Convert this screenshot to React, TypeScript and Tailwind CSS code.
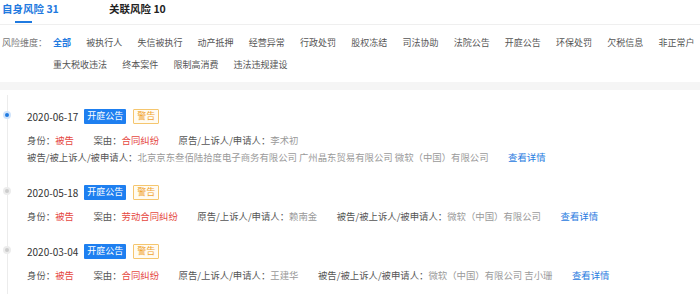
const filtersRow1 = ['被执行人', '失信被执行', '动产抵押', '经营异常', '行政处罚', '股权冻结', '司法协助', '法院公告', '开庭公告', '环保处罚', '欠税信息', '非正常户'];
const filtersRow2 = ['重大税收违法', '终本案件', '限制高消费', '违法违规建设'];

type Entry = {
  date: string;
  active?: boolean;
  reason: string;
  plaintiff: string;
  defendant: string;
  wrap?: boolean;
};

const entries: Entry[] = [
  {
    date: '2020-06-17',
    active: true,
    reason: '合同纠纷',
    plaintiff: '李术初',
    defendant: '北京京东叁佰陆拾度电子商务有限公司 广州晶东贸易有限公司 微软（中国）有限公司',
    wrap: true,
  },
  { date: '2020-05-18', reason: '劳动合同纠纷', plaintiff: '赖南金', defendant: '微软（中国）有限公司' },
  { date: '2020-03-04', reason: '合同纠纷', plaintiff: '王建华', defendant: '微软（中国）有限公司 吉小珊' },
];

function Field({ label, value, tone }: { label: string; value: string; tone: 'red' | 'gray' }) {
  return (
    <span className="whitespace-nowrap">
      <span className="text-[#555]">{label}：</span>
      <span className={tone === 'red' ? 'text-[#e5483f]' : 'text-[#9a9a9a]'}>{value}</span>
    </span>
  );
}

function TimelineItem({ e }: { e: Entry }) {
  return (
    <div className="relative pl-[19px] pb-[18px]">
      {/* dot sits on the line */}
      <span
        className={`absolute left-[-5px] top-[3px] w-[8px] h-[8px] rounded-full border-2 ${
          e.active ? 'bg-[#1f7ae0] border-[#cfe3fb]' : 'bg-[#cccccc] border-[#ececec]'
        }`}
      />
      <div className="flex items-center h-[16px]">
        <span className="text-[10px] text-[#333] mr-[6px]">{e.date}</span>
        <span className="h-[15px] px-[3px] flex items-center bg-[#1e7ff0] text-white text-[9px] rounded-[1px] mr-[7px]">开庭公告</span>
        <span className="h-[15px] px-[3px] flex items-center border border-[#f5c66e] bg-[#fffbf2] text-[#f0a530] text-[9px] rounded-[1px]">警告</span>
      </div>
      <div className="mt-[8px] text-[9.4px] leading-[17px]">
        {e.wrap ? (
          <>
            <div className="flex gap-x-[19.5px]">
              <Field label="身份" value="被告" tone="red" />
              <Field label="案由" value={e.reason} tone="red" />
              <Field label="原告/上诉人/申请人" value={e.plaintiff} tone="gray" />
            </div>
            <div className="flex gap-x-[19.5px]">
              <Field label="被告/被上诉人/被申请人" value={e.defendant} tone="gray" />
              <span className="text-[#1f7ae0] whitespace-nowrap">查看详情</span>
            </div>
          </>
        ) : (
          <div className="flex gap-x-[19.5px]">
            <Field label="身份" value="被告" tone="red" />
            <Field label="案由" value={e.reason} tone="red" />
            <Field label="原告/上诉人/申请人" value={e.plaintiff} tone="gray" />
            <Field label="被告/被上诉人/被申请人" value={e.defendant} tone="gray" />
            <span className="text-[#1f7ae0] whitespace-nowrap">查看详情</span>
          </div>
        )}
      </div>
    </div>
  );
}

export default function App() {
  return (
    <div className="w-[700px] h-[294px] overflow-hidden bg-white font-['Noto_Sans_CJK_SC',sans-serif]">
      {/* Tabs */}
      <div className="flex h-[25px] border-b border-[#efefef] pl-[2px]">
        <div className="flex flex-col w-[107px]">
          <span className="text-[10.5px] font-bold text-[#1f7ae0] leading-[18px]">自身风险 31</span>
          <span className="mt-[3px] ml-[13px] w-[17px] h-[2px] bg-[#1f7ae0]" />
        </div>
        <span className="text-[10.5px] font-bold text-[#222] leading-[18px]">关联风险 10</span>
      </div>

      {/* Filters */}
      <div className="flex pl-[2px] pt-[7px] text-[9px] leading-[22px]">
        <span className="w-[51px] text-[#777]">风险维度：</span>
        <div className="flex flex-col">
          <div className="flex gap-x-[15.2px]">
            <span className="text-[#1f7ae0] font-bold">全部</span>
            {filtersRow1.map((f) => (
              <span key={f} className="text-[#555] whitespace-nowrap">{f}</span>
            ))}
          </div>
          <div className="flex gap-x-[15.2px]">
            {filtersRow2.map((f) => (
              <span key={f} className="text-[#555] whitespace-nowrap">{f}</span>
            ))}
          </div>
        </div>
      </div>

      <div className="mt-[6px] h-[8px] bg-[#f5f5f5]" />

      {/* Timeline */}
      <div className="pt-[5px] pl-[7px]">
        <div className="border-l border-[#ececec] pt-[13px]">
          {entries.map((e) => (
            <TimelineItem key={e.date} e={e} />
          ))}
        </div>
      </div>
    </div>
  );
}
